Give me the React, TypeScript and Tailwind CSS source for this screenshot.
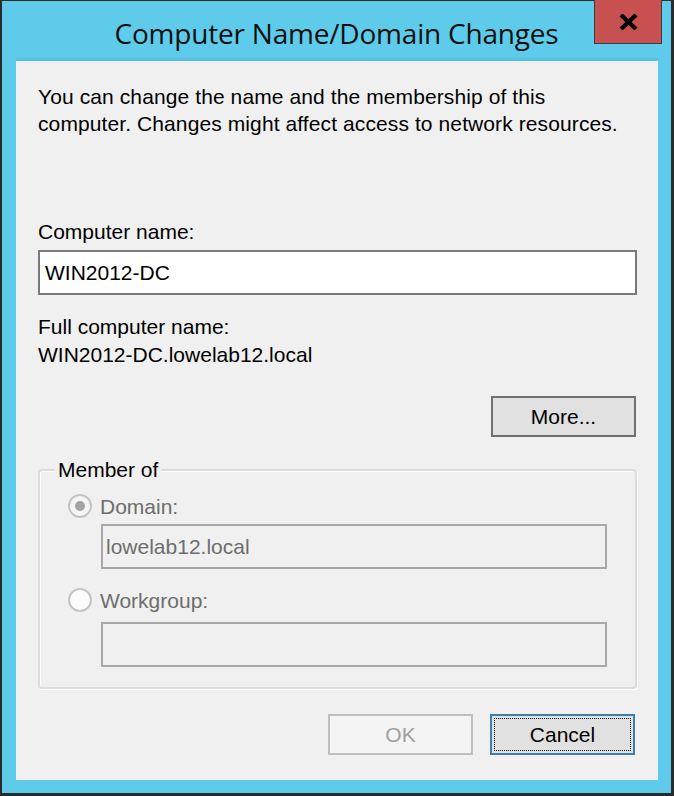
export default function App() {
  return (
    <div className="relative w-[674px] h-[796px] bg-[#5ecbeb] border-l-2 border-r-[3px] border-t border-b-[3px] border-[#2b2b2b] flex flex-col font-['Liberation_Sans',Arial,sans-serif] text-[21px] text-black">
      {/* title bar */}
      <div className="h-[60px] flex items-center justify-center pt-[3px] font-['Open_Sans',sans-serif] text-[28px] tracking-[-0.2px] text-[#101010]">
        Computer Name/Domain Changes
      </div>
      <button className="absolute right-[9px] top-[-1px] w-[68px] h-[44px] bg-[#c75050] border border-t-0 border-[#3b3b3b] flex items-center justify-center">
        <svg width="19" height="16" viewBox="0 0 19 16">
          <path d="M2 1 L17 15 M17 1 L2 15" stroke="#000" strokeWidth="4.2" />
        </svg>
      </button>

      {/* client area */}
      <div className="flex-1 ml-[14px] mr-[13px] mb-[13px] bg-[#f0f0f0] shadow-[0_-3px_0_#55bfdf] pl-[22px] pr-[21px] pt-[22px] flex flex-col leading-[27px]">
        <p className="tracking-[0.1px]">
          You can change the name and the membership of this
          <br />
          computer. Changes might affect access to network resources.
        </p>

        <div className="mt-[81px]">Computer name:</div>
        <div className="mt-[5px] h-[45px] bg-white border-2 border-[#7a7a7a] flex items-center pl-[5px]">
          WIN2012-DC
        </div>

        <div className="mt-[18px]">Full computer name:</div>
        <div className="mt-px">WIN2012-DC.lowelab12.local</div>

        <div className="flex justify-end mt-[28px] pr-px">
          <button className="w-[145px] h-[41px] bg-[#e1e1e1] border-2 border-[#707070] flex items-center justify-center">
            More...
          </button>
        </div>

        {/* Member of group */}
        <div className="relative mt-[32px] border-2 border-[#dcdcdc] rounded-[4px] pl-[28px] pr-[28px] pb-[20px] shadow-[inset_1px_1px_0_#fff,1px_1px_0_#fff]">
          <span className="absolute left-[15px] top-[-15px] px-[3px] bg-[#f0f0f0]">Member of</span>

          <div className="mt-[23px] flex items-center gap-[8px] h-[24px] text-[#6d6d6d]">
            <span className="w-[24px] h-[24px] rounded-full border-2 border-[#c4c4c4] bg-[#f4f4f4] flex items-center justify-center">
              <span className="w-[10px] h-[10px] rounded-full bg-[#a3a3a3]" />
            </span>
            Domain:
          </div>
          <div className="mt-[6px] ml-[33px] h-[45px] border-2 border-[#a8a8a8] flex items-center pl-[3px] text-[#6d6d6d]">
            lowelab12.local
          </div>

          <div className="mt-[19px] flex items-center gap-[8px] h-[24px] text-[#6d6d6d]">
            <span className="w-[24px] h-[24px] rounded-full border-2 border-[#c4c4c4] bg-[#fbfbfb]" />
            Workgroup:
          </div>
          <div className="mt-[10px] ml-[33px] h-[45px] border-2 border-[#a8a8a8]" />
        </div>

        <div className="mt-[25px] flex justify-end gap-[17px] pr-[2px]">
          <button className="w-[145px] h-[41px] bg-[#f4f4f4] border-2 border-[#bfbfbf] text-[#a0a0a0] flex items-center justify-center">
            OK
          </button>
          <button className="w-[145px] h-[41px] bg-[#e1e1e1] border-2 border-[#3c7fb1] p-[2px]">
            <span className="w-full h-full border border-dotted border-black flex items-center justify-center">
              Cancel
            </span>
          </button>
        </div>
      </div>
    </div>
  );
}
